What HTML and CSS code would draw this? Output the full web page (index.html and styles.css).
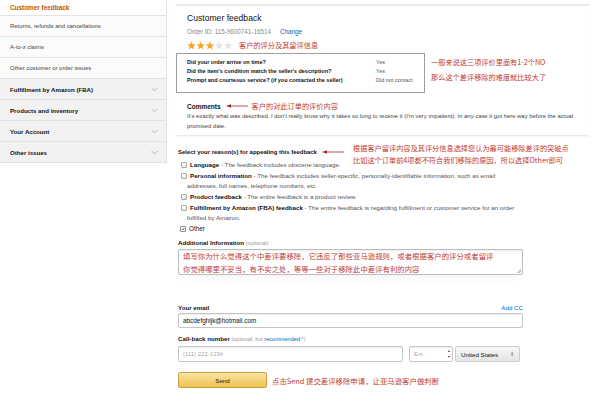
FILE: index.html
```html
<!DOCTYPE html>
<html lang="zh">
<head>
<meta charset="utf-8">
<title>Customer feedback</title>
<link rel="stylesheet" href="styles.css">
</head>
<body>
<div class="page">
  <aside class="sidebar">
    <div class="nav-item active">Customer feedback</div>
    <div class="nav-item">Returns, refunds and cancellations</div>
    <div class="nav-item">A-to-z claims</div>
    <div class="nav-item">Other customer or order issues</div>
    <div class="nav-group">Fulfillment by Amazon (FBA)<svg class="chev" viewBox="0 0 7 5"><polyline points="0.5,0.8 3.5,3.8 6.5,0.8"/></svg></div>
    <div class="nav-group">Products and inventory<svg class="chev" viewBox="0 0 7 5"><polyline points="0.5,0.8 3.5,3.8 6.5,0.8"/></svg></div>
    <div class="nav-group">Your Account<svg class="chev" viewBox="0 0 7 5"><polyline points="0.5,0.8 3.5,3.8 6.5,0.8"/></svg></div>
    <div class="nav-group">Other issues<svg class="chev" viewBox="0 0 7 5"><polyline points="0.5,0.8 3.5,3.8 6.5,0.8"/></svg></div>
  </aside>

  <main class="main">
    <section class="card">
      <h1 class="title">Customer feedback</h1>
      <div class="order">Order ID: 115-9600741-16514<a class="link change">Change</a></div>
      <div class="rating-row">
        <svg class="stars" viewBox="0 0 46 9">
          <polygon class="on" points="4.5,0.3 5.6,3.3 8.8,3.4 6.3,5.4 7.2,8.6 4.5,6.7 1.8,8.6 2.7,5.4 0.2,3.4 3.4,3.3"/>
          <polygon class="on" transform="translate(9.2 0)" points="4.5,0.3 5.6,3.3 8.8,3.4 6.3,5.4 7.2,8.6 4.5,6.7 1.8,8.6 2.7,5.4 0.2,3.4 3.4,3.3"/>
          <polygon class="on" transform="translate(18.4 0)" points="4.5,0.3 5.6,3.3 8.8,3.4 6.3,5.4 7.2,8.6 4.5,6.7 1.8,8.6 2.7,5.4 0.2,3.4 3.4,3.3"/>
          <polygon class="off" transform="translate(27.6 0)" points="4.5,0.3 5.6,3.3 8.8,3.4 6.3,5.4 7.2,8.6 4.5,6.7 1.8,8.6 2.7,5.4 0.2,3.4 3.4,3.3"/>
          <polygon class="off" transform="translate(36.8 0)" points="4.5,0.3 5.6,3.3 8.8,3.4 6.3,5.4 7.2,8.6 4.5,6.7 1.8,8.6 2.7,5.4 0.2,3.4 3.4,3.3"/>
        </svg>
        <span class="note">客户的评分及其留评信息</span>
      </div>
      <div class="ratings-wrap">
        <div class="ratings-box">
          <div class="rrow"><span class="q">Did your order arrive on time?</span><span class="a">Yes</span></div>
          <div class="rrow"><span class="q">Did the item's condition match the seller's description?</span><span class="a">Yes</span></div>
          <div class="rrow"><span class="q">Prompt and courteous service? (if you contacted the seller)</span><span class="a">Did not contact</span></div>
        </div>
        <div class="note side-note">一般来说这三项评价里面有1-2个NO<br>那么这个差评移除的难度就比较大了</div>
      </div>
      <div class="comments-head">
        <span class="comments-label">Comments</span>
        <svg class="arrow" viewBox="0 0 22 6"><line x1="3" y1="3" x2="22" y2="3"/><polygon points="0,3 5,1.2 5,4.8"/></svg>
        <span class="note">客户的对此订单的评价内容</span>
      </div>
      <p class="comment">It's exactly what was described. I don't really know why it takes so long to receive it (I'm very impatient). In any case it got here way before the actual promised date.</p>
    </section>

    <section class="form">
      <div class="select-head">
        <span class="label">Select your reason(s) for appealing this feedback</span>
        <svg class="arrow" viewBox="0 0 22 6"><line x1="3" y1="3" x2="22" y2="3"/><polygon points="0,3 5,1.2 5,4.8"/></svg>
        <div class="note select-note">根据客户留评内容及其评分信息选择您认为最可能移除差评的突破点<br>比如这个订单前4项都不符合我们移除的原因，所以选择Other即可</div>
      </div>
      <div class="reasons">
        <div class="reason"><span class="cb"></span><span class="rname">Language</span> - The feedback includes obscene language.</div>
        <div class="reason"><span class="cb"></span><span class="rname">Personal information</span> - The feedback includes seller-specific, personally-identifiable information, such as email addresses, full names, telephone numbers, etc.</div>
        <div class="reason"><span class="cb"></span><span class="rname">Product feedback</span> - The entire feedback is a product review.</div>
        <div class="reason"><span class="cb"></span><span class="rname">Fulfillment by Amazon (FBA) feedback</span> - The entire feedback is regarding fulfillment or customer service for an order fulfilled by Amazon.</div>
        <div class="reason other"><span class="cb checked"><svg viewBox="0 0 6 6"><polyline points="1.2,3 2.6,4.4 4.9,1.4"/></svg></span>Other</div>
      </div>

      <div class="field-label">Additional Information <span class="opt">(optional)</span></div>
      <div class="textarea">填写你为什么觉得这个中差评要移除，它违反了那些亚马逊规则，或者根据客户的评分或者留评<br>你觉得哪里不妥当，有不实之处，等等一些对于移除此中差评有利的内容<span class="grip"></span></div>

      <div class="field-label email-label"><span>Your email</span><a class="link">Add CC</a></div>
      <div class="input email">abcdefghijk@hotmail.com</div>

      <div class="field-label call-label">Call-back number <span class="opt">(optional, but <a class="link">recommended</a> *)</span></div>
      <div class="phone-row">
        <div class="input phone placeholder">(111) 222-1234</div>
        <div class="input ext placeholder">Ext.<span class="spin"><i class="up"></i><i class="down"></i></span></div>
        <div class="select">United States<span class="sel-arrows">⇕</span></div>
      </div>

      <div class="send-row">
        <div class="send">Send</div>
        <span class="note">点击Send 提交差评移除申请，让亚马逊客户做判断</span>
      </div>
    </section>
  </main>
</div>
</body>
</html>
```

FILE: styles.css
```css
* { box-sizing: border-box; margin: 0; padding: 0; }
html, body { width: 600px; height: 403px; overflow: hidden; background: #fff; }
body { font-family: "Liberation Sans", Arial, "Noto Sans CJK SC", sans-serif; color: #333; }

.page { display: flex; align-items: flex-start; }

/* sidebar */
.sidebar { width: 167px; flex: none; border-right: 1px solid #e2e2e2; background: #f3f3f3; }
.nav-item { height: 21px; display: flex; align-items: center; padding-left: 10px; font-size: 5.9px; color: #444; background: #fbfbfb; border-bottom: 1px solid #e3e3e3; }
.nav-item.active { height: 16px; color: #c45500; font-weight: bold; font-size: 6.4px; background: #fff; }
.nav-group { height: 21px; display: flex; align-items: center; justify-content: space-between; padding: 0 8px 0 10px; font-size: 6.1px; font-weight: bold; color: #111; background: #f2f2f2; border-bottom: 1px solid #e1e1e1; }
.chev { width: 7px; height: 5px; }
.chev polyline { fill: none; stroke: #a8a8a8; stroke-width: 0.8; }

/* main */
.main { flex: 1; padding: 4px 10px 0 9px; }
.card { border-top: 2px solid #ececec; padding: 7px 0 4px 11px; box-shadow: 0 2px 2px -1px rgba(0,0,0,0.13); }
.title { font-size: 8.6px; line-height: 11px; font-weight: normal; color: #111; }
.order { margin-top: 2.5px; font-size: 6.3px; line-height: 9px; color: #888; }
.link { color: #0066c0; text-decoration: none; }
.change { margin-left: 9px; }
.rating-row { margin-top: 4.5px; height: 10px; display: flex; align-items: center; }
.stars { width: 46px; height: 9px; margin-right: 6px; }
.stars .on { fill: #f4a623; }
.stars .off { fill: #e4e4e4; }
.note { font-family: "Noto Sans CJK SC", "Liberation Sans", sans-serif; font-size: 7.2px; color: #c0392f; white-space: nowrap; }

.ratings-wrap { margin-top: 3px; margin-left: -11px; display: flex; align-items: flex-start; }
.ratings-box { width: 249px; height: 40px; border: 1px solid #9d9d9d; padding: 3.5px 0 0 10px; }
.rrow { display: flex; font-size: 5.5px; line-height: 9px; }
.rrow .q { width: 189px; font-weight: bold; color: #111; }
.rrow .a { color: #555; }
.side-note { margin-left: 6px; padding-top: 2px; line-height: 15px; }

.comments-head { margin-top: 8px; height: 10px; display: flex; align-items: center; }
.comments-label { font-size: 6.5px; font-weight: bold; color: #111; }
.arrow { width: 22px; height: 6px; margin: 0 4px 0 5px; flex: none; }
.arrow line { stroke: #9e2a22; stroke-width: 0.8; }
.arrow polygon { fill: #9e2a22; }
.comment { font-size: 5.9px; line-height: 10px; color: #444; }

/* form */
.form { padding: 12px 0 0 2px; width: 347px; }
.select-head { position: relative; height: 10px; display: flex; align-items: center; }
.label { font-size: 5.95px; font-weight: bold; color: #111; white-space: nowrap; }
.select-note { position: absolute; left: 175px; top: -5px; line-height: 12px; }

.reasons { margin-top: 3px; }
.reason { padding-left: 9px; text-indent: -6px; font-size: 6.2px; line-height: 10px; color: #555; margin-bottom: 1px; }
.rname { color: #111; font-weight: bold; font-size: 6.2px; }
.reason.other { color: #111; font-size: 6.3px; text-indent: -7px; }
.cb { display: inline-block; width: 6px; height: 6px; margin-right: 3px; vertical-align: -0.5px; border: 0.8px solid #a9a9a9; border-radius: 1px; background: linear-gradient(#fff, #e9e9e9); text-indent: 0; }
.cb.checked { background: #fff; border-color: #8f8f8f; }
.cb svg { width: 100%; height: 100%; display: block; }
.cb polyline { fill: none; stroke: #222; stroke-width: 1.1; }

.field-label { margin-top: 4px; font-size: 6.2px; line-height: 10px; font-weight: bold; color: #111; }
.opt { font-weight: normal; color: #999; font-size: 5.4px; }
.textarea { position: relative; margin-top: 1px; height: 26px; border: 1px solid #bdbdbd; border-radius: 2px; padding: 0 4px; font-family: "Noto Sans CJK SC", sans-serif; font-size: 7.4px; line-height: 12.5px; color: #c0392f; box-shadow: inset 0 1px 2px rgba(0,0,0,0.08), 0 8px 10px -6px rgba(0,0,0,0.05); }
.grip { position: absolute; right: 1px; bottom: 1px; width: 4px; height: 4px; background: linear-gradient(135deg, transparent 45%, #aaa 45%, #aaa 55%, transparent 55%, transparent 70%, #aaa 70%, #aaa 80%, transparent 80%); }

.email-label { margin-top: 28px; display: flex; justify-content: space-between; }
.email-label .link { font-weight: normal; font-size: 6.2px; }
.input { height: 15px; border: 1px solid #c6c6c6; border-radius: 2px; padding: 0 4px; display: flex; align-items: center; font-size: 6.4px; color: #111; box-shadow: inset 0 1px 1px rgba(0,0,0,0.07); }
.call-label { margin-top: 6px; }
.call-label .link { font-size: 5.6px; }
.phone-row { margin-top: 2px; display: flex; height: 16px; }
.phone-row .input { height: 16px; }
.placeholder { color: #aaa; font-size: 6px; }
.phone { width: 225px; }
.ext { width: 44px; margin-left: 6px; position: relative; padding-left: 4px; }
.spin { position: absolute; right: 1px; top: 2px; bottom: 2px; width: 4px; display: flex; flex-direction: column; justify-content: space-between; }
.spin i { display: block; width: 0; height: 0; border-left: 1.5px solid transparent; border-right: 1.5px solid transparent; margin: 1px auto; }
.spin .up { border-bottom: 2px solid #444; }
.spin .down { border-top: 2px solid #444; }
.select { width: 65px; margin-left: 2px; height: 16px; border: 1px solid #cdcdcd; border-radius: 2px; background: linear-gradient(#f7f7f7, #e5e5e5); display: flex; align-items: center; justify-content: space-between; padding: 0 5px 0 5px; font-size: 6.2px; color: #111; }
.sel-arrows { font-size: 5px; color: #555; }

.send-row { margin-top: 10px; display: flex; align-items: center; }
.send { width: 89px; height: 16px; border: 1px solid #c9a042; border-radius: 2px; background: linear-gradient(#f8e3a6, #efc24f); display: flex; align-items: center; justify-content: center; font-size: 6.2px; color: #111; }
.send-row .note { margin-left: 5px; font-size: 7.4px; }
```
